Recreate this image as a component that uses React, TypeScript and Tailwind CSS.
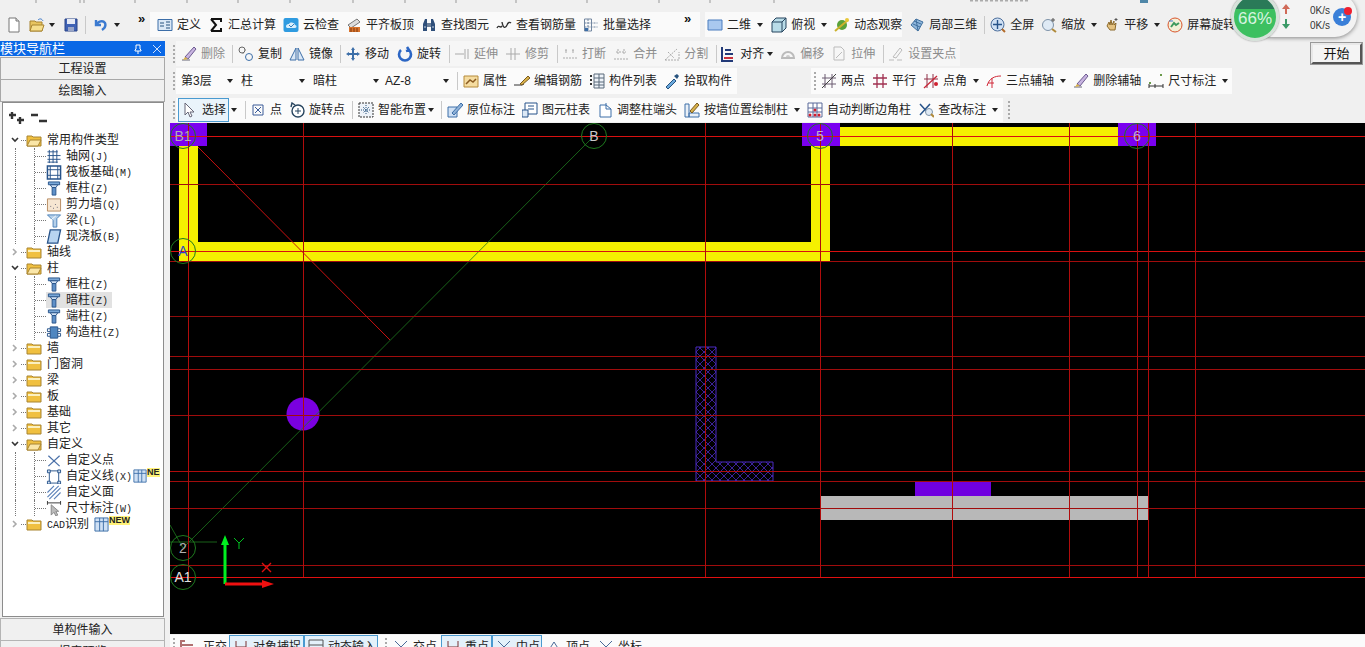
import type { ReactNode } from 'react';

// small toolbar drawings, all on a 16x16 grid
const icons: Record<string, ReactNode> = {
  file: <><path d="M3 1h7l3 3v11H3z" fill="#fff" stroke="#777" /><path d="M10 1v3h3" fill="#ddd" stroke="#777" /></>,
  open: <><path d="M1 4h5l1 1h6v9H1z" fill="#e8c560" stroke="#a88430" /><path d="M3 8h12l-2 6H1z" fill="#f6de8c" stroke="#a88430" /><path d="M9 3c2-2 4-1 5 1" fill="none" stroke="#3a78c8" /></>,
  save: <><path d="M2 2h12v12H2z" fill="#3f62b5" stroke="#2a4488" /><path d="M4 2h8v5H4z" fill="#e6eaf5" /><path d="M5 10h6v4H5z" fill="#9aa6c8" /></>,
  undo: <path d="M4 3v5h5M4.500 8C6 4 11 3 13 6c1 2.500 0 5-3 7" fill="none" stroke="#3b7ad0" strokeWidth="2.400" />,
  define: <><path d="M1 2.500h14v11H1z" fill="#dbe8f6" stroke="#3c6ea8" /><path d="M3 6h4M3 9h4M9 5h4M9 8h4M9 11h4" stroke="#27537f" /></>,
  sum: <path d="M3 2h10v3M3 14h10v-3M3 2l5 6-5 6" fill="none" stroke="#111" strokeWidth="2" />,
  cloud: <><rect x="0.500" y="1" width="15" height="14" rx="2" fill="#2f9be0" /><path d="M3 10c0-3 2-3 3-3 1-2 5-2 6 1 2 0 2 3 0 3H4z" fill="#d9eefb" /><path d="M6 8l2 2 3-3" fill="none" stroke="#2f7fc0" /></>,
  level: <><path d="M2 8l9-6 3 3-9 6z" fill="#ddd" stroke="#777" /><path d="M3 10h11v5H3z" fill="#d9742c" /><path d="M5 11v4M8 11v4M11 11v4" stroke="#7a3810" /></>,
  binoc: <><path d="M2 14V7l2-5h2v12zM10 14V2h2l2 5v7z" fill="#2f4f7a" /><path d="M6 6h4v4H6z" fill="#6c7f98" /><path d="M3 10h2M11 10h2" stroke="#c7d3e2" /></>,
  rebar: <path d="M1 11c2-4 3 1 5-2M6 5c1 6 3 7 5 3 1-3 3-3 4-2" fill="none" stroke="#333" strokeWidth="1.400" />,
  batch: <><path d="M1.500 2h7v12h-7z" fill="none" stroke="#7286a0" /><path d="M1.500 6h13M1.500 10h13M5 2v12" stroke="#7286a0" strokeDasharray="2 1" /><path d="M2 11h3v3H2z" fill="#3c6ea8" /></>,
  plane: <path d="M1 3h14v10H1z" fill="#a9c8ef" stroke="#4b7dbe" />,
  box: <><path d="M1 5l4-4h10v10l-4 4H1z" fill="#b9dce8" stroke="#27445e" /><path d="M1 5h10v10M11 5l4-4" fill="none" stroke="#27445e" /></>,
  orbit: <><circle cx="8" cy="8" r="5" fill="#5aa23a" /><path d="M1 14L14 3" stroke="#cbb12c" strokeWidth="2" /><circle cx="13" cy="3" r="2" fill="#e8c83a" /></>,
  cube3: <><path d="M2 8l5-6 7 3-5 9z" fill="#8fb7dc" stroke="#41709e" /><path d="M5 4l7 3M4 7l7 3M7 2l2 12" stroke="#41709e" /></>,
  full: <><circle cx="7.500" cy="7.500" r="6.500" fill="#cfe0f4" stroke="#4d6f9c" /><path d="M7.500 3v9M3 7.500h9" stroke="#27538a" strokeWidth="1.400" /><path d="M12 12l3 3" stroke="#b36b2a" strokeWidth="2" /></>,
  zoom: <><circle cx="7" cy="8" r="5.500" fill="#dfeaf5" stroke="#7d92a8" /><path d="M11 12l4 3" stroke="#b08a3a" strokeWidth="2" /><path d="M12 1v4M10 3h4" stroke="#555" /></>,
  pan: <><path d="M3 9l2-4 1 3 1-5 1 5 2-4v4l2-2-1 7H6z" fill="#e5c382" stroke="#8c6a2c" /><path d="M12 1v3M10.500 2.500h3" stroke="#555" /></>,
  screen: <><circle cx="8" cy="8" r="7" fill="#f3f0d8" stroke="#d9542c" /><path d="M4 10l3-4 2 2 3-2" stroke="#3e9a5e" fill="none" strokeWidth="2" /><path d="M2 4h4" stroke="#3b7ad0" /></>,
  brush: <><path d="M1 14h8" stroke="#667" /><path d="M4 11L13 1l2 2-8 10z" fill="#c8b4e0" stroke="#6c5a90" /><path d="M2 14l2-3 3 2z" fill="#d9b24a" /></>,
  copy: <><circle cx="4" cy="4" r="3" fill="none" stroke="#666" /><circle cx="11" cy="11" r="3.500" fill="none" stroke="#3c6ea8" /><path d="M7 4h2M5 7v2" stroke="#888" strokeDasharray="1 1" /></>,
  mirror: <path d="M7 2L1 14h6zM9 2l6 12H9z" fill="#dbe8f6" stroke="#3c6ea8" />,
  move: <path d="M8 1l2 3H9v3h3V6l3 2-3 2V9H9v3h1l-2 3-2-3h1V9H4v1L1 8l3-2v1h3V4H6z" fill="#3c6ea8" />,
  rotate: <path d="M4 4a6 6 0 1 0 8 0M10 1l2 3-3 1" fill="none" stroke="#2c66c4" strokeWidth="2.600" />,
  extend: <path d="M1 8h9M11 3v10M14 3v10" stroke="#aaa" />,
  trim: <path d="M1 8h14M6 2v12M10 2v12" stroke="#aaa" />,
  breakLine: <path d="M1 12h14M3 5h3M10 5h3M4 3v4M11 3v4" stroke="#aaa" strokeDasharray="2 1" />,
  merge: <path d="M1 13h14M3 6h10M5 3v6M11 3v6" stroke="#aaa" strokeDasharray="2 1" />,
  split: <path d="M1 14h14V6M1 14L13 3M4 6l6 6" stroke="#aaa" fill="none" strokeDasharray="2 1" />,
  align: <><path d="M2 1v14h11" fill="none" stroke="#223a78" strokeWidth="2" /><path d="M5 4h6M5 8h8" stroke="#223a78" strokeWidth="2" /><path d="M4 12h9" stroke="#c8303c" strokeWidth="2" /></>,
  offset: <><path d="M2 12a6 6 0 1 1 12 0z" fill="none" stroke="#bbb" strokeWidth="2" /><path d="M6 11a2 2 0 1 1 4 0z" fill="#ccc" /></>,
  stretch: <path d="M3 1h7l3 3v10H3zM5 12l6-6" fill="none" stroke="#bbb" />,
  grab: <path d="M1 14h5M9 14h5M5 11L12 2l2 2-6 8z" fill="none" stroke="#bbb" />,
  prop: <><path d="M1 3h14v11H1z" fill="#f5dca0" stroke="#b58a3a" /><path d="M3 11l4-4 3 2 3-3" fill="none" stroke="#8a5a20" strokeWidth="1.500" /></>,
  edit: <><path d="M0 12h8l2-1" stroke="#333" fill="none" /><path d="M6 11L14 3l2 2-8 7z" fill="#d9b24a" stroke="#7a5a20" /></>,
  list: <><path d="M5 1h10v14H5z" fill="#eef3f9" stroke="#5a6a7a" /><path d="M10 1v14M5 5h10M5 9h10M5 12h10" stroke="#5a6a7a" /><path d="M2 2v12" stroke="#333" strokeDasharray="2 2" strokeWidth="2" /></>,
  pick: <><path d="M2 14l8-8 2 2-8 8z" fill="#6aa8dc" stroke="#27537f" /><path d="M10 3l3 3 2-3-2-2z" fill="#27537f" /></>,
  twoPt: <><path d="M4 1v14M11 1v14M1 5h14M1 11h14" stroke="#6a5a70" /><path d="M1 15L15 1" stroke="#444" /></>,
  parallel: <path d="M5 1v14M11 1v14M1 5h14M1 11h14" stroke="#a03050" strokeWidth="1.300" />,
  angle: <><path d="M4 1v14M10 1v14M1 6h14" stroke="#903048" /><path d="M1 15L14 3" stroke="#c82838" strokeWidth="1.300" /><circle cx="13" cy="11" r="2" fill="#d02030" /></>,
  threePt: <><path d="M1 13C3 5 9 3 15 3" fill="none" stroke="#d02838" /><path d="M6 5v10M2 10h6" stroke="#d02838" /></>,
  dim: <><path d="M1 13h14M1 11v4M15 11v4M7 11v4" stroke="#333" /><rect x="1" y="9" width="2" height="2" fill="#6a9a4a" /><rect x="12" y="1" width="2" height="2" fill="#6a9a4a" /></>,
  cursor: <path d="M3 1v12l3-3 2 5 2-1-2-4h4z" fill="#fff" stroke="#667" />,
  pointX: <><path d="M3 3h10v10H3z" fill="none" stroke="#3a5a98" /><path d="M5 5l6 6M11 5l-6 6" stroke="#3a5a98" /></>,
  rotPt: <><circle cx="9" cy="9" r="6" fill="#fff" stroke="#27445e" strokeWidth="1.400" /><path d="M9 6v6M6 9h6" stroke="#27445e" /><path d="M2 5l1-4 3 2" fill="none" stroke="#27445e" strokeWidth="1.400" /></>,
  smart: <><path d="M1 1h14v14H1z" fill="#eef3f9" stroke="#333" strokeDasharray="2 1" /><path d="M8 3v10M3 8h10M5 5l6 6M11 5l-6 6" stroke="#27537f" strokeDasharray="1 1" /></>,
  inPlace: <><path d="M1 5h9v10H1z" fill="#cfe0f4" stroke="#3c6ea8" /><path d="M5 11L14 1l2 2-9 10z" fill="#8fb2d8" stroke="#3c6ea8" /></>,
  table: <><path d="M3 1h12v11H3z" fill="#fff" stroke="#27538a" /><path d="M6 4h6M6 7h6" stroke="#27538a" /><path d="M0 8h6v7H0z" fill="#dbe8f6" stroke="#27538a" /></>,
  adjust: <><path d="M3 3h6l5 4v8H3z" fill="#fff" stroke="#3c6ea8" /><path d="M9 1v6h5" fill="none" stroke="#3c6ea8" /></>,
  wall: <><path d="M1 2h4v13H1zM5 11h10v4H5z" fill="#eaf0f7" stroke="#3c6ea8" /><path d="M6 9l7-8 2 2-7 8z" fill="#d9b24a" stroke="#7a5a20" /></>,
  corner: <><path d="M1 1h14v14H1zM1 6h14M1 10h14M6 1v14M10 1v14" fill="#fff" stroke="#5a6a9a" /><circle cx="3" cy="13" r="1.500" fill="#d02030" /><circle cx="8" cy="13" r="1.500" fill="#d02030" /><circle cx="12" cy="13" r="1.500" fill="#d02030" /><circle cx="8" cy="8" r="1.500" fill="#d02030" /></>,
  review: <><path d="M2 2l10 11M12 2L2 13" stroke="#27538a" strokeWidth="1.500" /><circle cx="11" cy="10" r="3.500" fill="#dfeaf5" stroke="#7d92a8" /><path d="M13 12l3 3" stroke="#b08a3a" strokeWidth="2" /></>,
  ortho: <path d="M2 14V2h4M2 6h12" stroke="#b07070" strokeWidth="2" fill="none" />,
  snap: <path d="M3 2v12M13 2v12M3 8h10" stroke="#7a3030" />,
  dynamic: <path d="M1 1h14v12H1zM1 6h14" fill="none" stroke="#555" />,
  cross: <path d="M2 2l12 12M14 2L2 14" stroke="#4a6a98" />,
  up: <path d="M1 14L8 3l7 11" fill="none" stroke="#4a6a98" />,
  column: <><path d="M2 1h12v3H2z" fill="#7aa8d8" stroke="#27538a" /><path d="M4 4h8l-2 3H6z" fill="#cfe0f4" stroke="#27538a" /><path d="M6 7h4v8H6z" fill="#5f90c8" stroke="#27538a" /></>,
  grid: <path d="M1 3h11M1 7h14M1 11h14M1 14h11M3 1v14M7 1v14M11 1v14" stroke="#27538a" />,
  raft: <><path d="M1 1h14v14H1z" fill="#fff" stroke="#27538a" strokeWidth="1.600" /><path d="M4 1v14M12 1v14M1 5h14M1 11h14" stroke="#27538a" /></>,
  shear: <><path d="M1 2h14v13H1z" fill="#f6e6d2" stroke="#b58a60" /><path d="M4 10h1M7 12h1M9 8h1M11 11h1" stroke="#667" /></>,
  beam: <><path d="M1 2h14l-4 4v9H7V8z" fill="#b5d0ea" stroke="#4a80b8" /><path d="M10 3l-7 6" stroke="#fff" /></>,
  slab: <path d="M4 1h11l-3 14H1z" fill="#b8d4f0" stroke="#27538a" strokeWidth="1.400" />,
  struct: <><path d="M4 2h8v12H4z" fill="#4f86c0" stroke="#27538a" /><path d="M1 4h3v3H1zM12 4h3v3h-3zM1 9h3v3H1zM12 9h3v3h-3z" fill="#fff" stroke="#27538a" /></>,
  userPt: <><path d="M2 3l12 11M14 3L2 14" stroke="#4a70a8" strokeWidth="1.300" /></>,
  userLine: <><path d="M3 2h10v13H3z" fill="none" stroke="#27538a" /><path d="M1 1h3v3H1zM12 1h3v3h-3zM1 13h3v3H1zM12 13h3v3h-3z" fill="#cfe0f4" stroke="#27538a" /></>,
  userArea: <path d="M1 8l7-7M1 13L13 1M3 15L15 3M8 15l7-7" stroke="#5a80b8" strokeWidth="1.200" />,
  userDim: <><path d="M1 2h14M1 0v4M15 0v4" stroke="#333" /><path d="M5 4v11l3-3 2 4 2-1-2-4h3z" fill="#bbb" stroke="#888" /></>,
  book: <path d="M1 1h14v14H1zM6 1v14M10 1v14M1 5h14" fill="#cfe0f4" stroke="#3c6ea8" />,
};

function Icon({ name, className = 'h-4 w-4' }: { name: string; className?: string }) {
  return (
    <svg viewBox="0 0 16 16" className={`shrink-0 ${className}`}>
      {icons[name]}
    </svg>
  );
}

function Tool({ icon, label, off, className = '' }: { icon: string; label: string; off?: boolean; className?: string }) {
  return (
    <div className={`flex shrink-0 items-center ${className}`}>
      <Icon name={icon} />
      <span className={`ml-1 whitespace-nowrap ${off ? 'text-[#8c8c8c]' : 'text-[#222]'}`}>{label}</span>
    </div>
  );
}

function Caret({ className = '' }: { className?: string }) {
  return (
    <svg viewBox="0 0 6 4" className={`h-1 w-[6px] shrink-0 ${className}`}>
      <path d="M0 0h6L3 4z" fill="#222" />
    </svg>
  );
}

function Divider({ className = '' }: { className?: string }) {
  return <div className={`h-[18px] w-px shrink-0 bg-[#c9c9c9] ${className}`} />;
}

function Grip({ className = '' }: { className?: string }) {
  return <div className={`h-[18px] w-[3px] shrink-0 border-l-2 border-dotted border-[#aaa] ${className}`} />;
}

function Chevrons({ className = '' }: { className?: string }) {
  return <span className={`-mt-3 w-[11px] shrink-0 text-[13px] font-bold leading-none text-[#111] ${className}`}>»</span>;
}

function Combo({ label, className }: { label: string; className: string }) {
  return (
    <div className={`flex shrink-0 items-center justify-between ${className}`}>
      <span>{label}</span>
      <Caret />
    </div>
  );
}

type TreeItem = {
  label: string;
  latin?: string;
  icon?: string;
  open?: boolean;
  active?: boolean;
  badge?: boolean;
};

const tree: TreeItem[] = [
  { label: '常用构件类型', open: true },
  { label: '轴网', latin: '(J)', icon: 'grid' },
  { label: '筏板基础', latin: '(M)', icon: 'raft' },
  { label: '框柱', latin: '(Z)', icon: 'column' },
  { label: '剪力墙', latin: '(Q)', icon: 'shear' },
  { label: '梁', latin: '(L)', icon: 'beam' },
  { label: '现浇板', latin: '(B)', icon: 'slab' },
  { label: '轴线' },
  { label: '柱', open: true },
  { label: '框柱', latin: '(Z)', icon: 'column' },
  { label: '暗柱', latin: '(Z)', icon: 'column', active: true },
  { label: '端柱', latin: '(Z)', icon: 'column' },
  { label: '构造柱', latin: '(Z)', icon: 'struct' },
  { label: '墙' },
  { label: '门窗洞' },
  { label: '梁' },
  { label: '板' },
  { label: '基础' },
  { label: '其它' },
  { label: '自定义', open: true },
  { label: '自定义点', icon: 'userPt' },
  { label: '自定义线', latin: '(X)', icon: 'userLine', badge: true },
  { label: '自定义面', icon: 'userArea' },
  { label: '尺寸标注', latin: '(W)', icon: 'userDim' },
];

function Folder({ open }: { open?: boolean }) {
  return (
    <svg viewBox="0 0 16 14" className="h-[14px] w-4 shrink-0">
      <path d="M1 3h5l1 1h8v9H1z" fill="#f0c040" stroke="#a88430" />
      {open ? <path d="M4 7h11l-3 6H1z" fill="#fae6a8" stroke="#a88430" /> : <path d="M2 5h12v2H2z" fill="#fbf0c0" />}
    </svg>
  );
}

function Expander({ open }: { open?: boolean }) {
  return (
    <svg viewBox="0 0 8 8" className="ml-2 h-2 w-2 shrink-0">
      {open ? (
        <path d="M1 2l3 3 3-3" fill="none" stroke="#333" strokeWidth="1.600" />
      ) : (
        <path d="M2 1l3 3-3 3" fill="none" stroke="#aaa" strokeWidth="1.600" />
      )}
    </svg>
  );
}

function TreeRow({ item }: { item: TreeItem }) {
  if (!item.icon) {
    return (
      <div className="flex h-4 shrink-0 items-center">
        <Expander open={item.open} />
        <span className="ml-[2px] w-[5px] border-t border-dotted border-[#777]" />
        <Folder open={item.open} />
        <span className="ml-[5px] whitespace-nowrap">{item.label}</span>
      </div>
    );
  }
  return (
    <div className="flex h-4 shrink-0 items-stretch">
      <span className="w-[13px] shrink-0 border-r border-dotted border-[#777]" />
      <span className="w-[19px] shrink-0 border-r border-dotted border-[#777]" />
      <span className="w-[11px] shrink-0 self-center border-t border-dotted border-[#777]" />
      <div className={`flex items-center ${item.active ? 'bg-[#e2e2e2] pr-[4px]' : ''}`}>
        <Icon name={item.icon} className="h-[15px] w-4" />
        <span className="ml-1 whitespace-nowrap">
          {item.label}
          {item.latin && <span className="[font-family:'Liberation_Mono',monospace] text-[10px]">{item.latin}</span>}
        </span>
      </div>
      {item.badge && (
        <div className="flex items-center">
          <Icon name="book" className="ml-px h-[14px] w-[14px]" />
          <span className="-mt-2 bg-[#fff27a] text-[9px] font-bold leading-[9px] text-[#222]">NE</span>
        </div>
      )}
    </div>
  );
}

function Sidebar() {
  return (
    <aside className="flex w-[165px] shrink-0 flex-col">
      <div className="flex h-[15px] shrink-0 items-center justify-between bg-[#0a68e6] pr-[3px] text-[13px] leading-none text-white">
        <span>模块导航栏</span>
        <span className="flex items-center gap-[9px]">
          <svg viewBox="0 0 10 10" className="h-[10px] w-[10px]">
            <path d="M3 1h4v4l1 1v1H2V6l1-1zM5 7v3" fill="none" stroke="#fff" />
          </svg>
          <svg viewBox="0 0 10 10" className="h-[10px] w-[10px]">
            <path d="M1 1l8 8M9 1L1 9" stroke="#cfe0fa" />
          </svg>
        </span>
      </div>
      <div className="mt-px flex h-[23px] shrink-0 items-center justify-center border border-[#a8a8a8] bg-[#f0f0f0]">工程设置</div>
      <div className="flex h-[22px] shrink-0 items-center justify-center border-x border-b border-[#a8a8a8] bg-[#f0f0f0]">绘图输入</div>
      <div className="ml-[2px] mr-px flex h-[515px] shrink-0 flex-col border border-[#8c8c8c] bg-white">
        <div className="flex h-[29px] shrink-0 items-center gap-[4px] pl-[5px]">
          <svg viewBox="0 0 18 14" className="h-[14px] w-[18px]">
            <path d="M4 1v7M1 4h7M12 6v7M9 9h7" stroke="#333" strokeWidth="2.400" />
          </svg>
          <svg viewBox="0 0 18 14" className="h-[14px] w-[18px]">
            <path d="M1 4h7M9 10h8" stroke="#333" strokeWidth="2.400" />
          </svg>
        </div>
        {tree.map((item, i) => (
          <TreeRow key={i} item={item} />
        ))}
        <div className="flex h-4 shrink-0 items-center">
          <Expander />
          <span className="ml-[2px] w-[5px] border-t border-dotted border-[#777]" />
          <Folder />
          <span className="ml-[5px] whitespace-nowrap">
            <span className="[font-family:'Liberation_Mono',monospace] text-[10px]">CAD</span>识别
          </span>
          <Icon name="book" className="ml-[5px] h-[15px] w-[15px]" />
          <span className="-mt-2 bg-[#fff27a] text-[9px] font-bold leading-[9px] text-[#222]">NEW</span>
        </div>
      </div>
      <div className="mt-px flex h-[23px] shrink-0 items-center justify-center border border-[#b4b4b4] bg-[#f0f0f0]">单构件输入</div>
      <div className="flex h-[23px] shrink-0 items-center justify-center border-x border-b border-[#b4b4b4] bg-[#f0f0f0]">报表预览</div>
    </aside>
  );
}

function Drawing() {
  const hLines = [
    [136.5, '#d81010'], [184.5, '#a00c0c'], [251.5, '#d81010'], [261.5, '#a00c0c'], [316.5, '#900c0c'], [356.5, '#a00c0c'],
    [369.5, '#a00c0c'], [415.5, '#a00c0c'], [471.5, '#b00c0c'], [481.5, '#a00c0c'], [508.5, '#a00c0c'], [565.5, '#a00c0c'], [577.5, '#e01010'],
  ] as const;
  const vLines = [188.5, 303.5, 705.5, 820.5, 952.5, 1069.5, 1137.5, 1148.5, 1195.5];
  const bubbles = [
    { x: 183, y: 136, t: 'B1', c: '#b0b0b0' },
    { x: 594, y: 136, t: 'B', c: '#c8c8c8' },
    { x: 183, y: 251, t: 'A', c: '#3048c8' },
    { x: 820, y: 136, t: '5', c: '#c0b0c8' },
    { x: 1137, y: 136, t: '6', c: '#c0b0c8' },
    { x: 183, y: 548, t: '2', c: '#b0b0b0' },
    { x: 183, y: 577, t: 'A1', c: '#e0e0e0' },
  ];
  return (
    <svg viewBox="170 123 1195 511" className="block h-[511px] w-[1195px] bg-black">
      <defs>
        <pattern id="hatch" width="8" height="8" patternUnits="userSpaceOnUse">
          <path d="M0 0l8 8M8 0L0 8" stroke="#4a2ac0" strokeWidth="0.800" />
        </pattern>
      </defs>

      {/* wall centre lines and columns */}
      <path d="M179 146h19v96h613V146h19v115H179z" fill="#f5f000" />
      <path d="M840 127h278v19H840z" fill="#f5f000" />
      <path d="M170 123h37v23h-37zM802 123h38v23h-38zM1118 123h38v23h-38z" fill="#7a00f0" />
      <path d="M915 482h76v14h-76z" fill="#7000e0" />
      <path d="M821 496h327v24H821z" fill="#b8b8b8" />
      <path d="M696 347h20v115h57v19h-77z" fill="url(#hatch)" stroke="#4a2ac0" />
      <circle cx="303" cy="414" r="16.500" fill="#7a00e0" />

      {/* axis grid */}
      <path d="M183 548L594 136M170 542h47M170 525l13 23" stroke="#1e7a1e" strokeWidth="0.800" fill="none" />
      {hLines.map(([y, c]) => (
        <line key={y} x1="170" x2="1365" y1={y} y2={y} stroke={c} />
      ))}
      {vLines.map((x) => (
        <line key={x} x1={x} x2={x} y1="123" y2="577" stroke="#b00c0c" />
      ))}
      <line x1="198" y1="147" x2="390" y2="340" stroke="#c81010" />

      {bubbles.map((b) => (
        <g key={b.t}>
          <circle cx={b.x} cy={b.y} r="12.500" fill="none" stroke="#1e7a1e" />
          <text x={b.x} y={b.y + 5} textAnchor="middle" fontSize="14" fontFamily="Liberation Sans, sans-serif" fill={b.c}>
            {b.t}
          </text>
        </g>
      ))}

      {/* coordinate marker */}
      <path d="M225 584v-42" stroke="#00f020" strokeWidth="3" />
      <path d="M225 535l4 10h-8z" fill="#00f020" />
      <path d="M225 584h38" stroke="#f01010" strokeWidth="3" />
      <path d="M274 584l-12-4v8z" fill="#f01010" />
      <path d="M234 538l5 5 5-5M239 543v6" stroke="#00c020" fill="none" />
      <path d="M262 563l9 9M271 563l-9 9" stroke="#e01010" strokeWidth="1.400" />
    </svg>
  );
}

function SpeedWidget() {
  return (
    <>
      <div className="absolute left-[1250px] top-[-7px] h-11 w-[107px] rounded-full bg-[#f3f3f3] shadow-[0_1px_4px_rgba(0,0,0,0.45)]">
        <svg viewBox="0 0 10 10" className="absolute left-[31px] top-[11px] h-[10px] w-[10px]">
          <path d="M5 0l4 5H6v5H4V5H1z" fill="#d06a58" />
        </svg>
        <svg viewBox="0 0 10 10" className="absolute left-[31px] top-[26px] h-[10px] w-[10px]">
          <path d="M5 10L1 5h3V0h2v5h3z" fill="#3c9a68" />
        </svg>
        <span className="absolute left-[60px] top-[11px] text-[10px] leading-[14px] text-[#333] [font-family:'Liberation_Sans',sans-serif]">0K/s</span>
        <span className="absolute left-[60px] top-[26px] text-[10px] leading-[14px] text-[#333] [font-family:'Liberation_Sans',sans-serif]">0K/s</span>
        <span className="absolute left-[83px] top-[15px] flex h-[18px] w-[18px] items-center justify-center rounded-full bg-[#3a7fd8] text-[14px] font-bold leading-none text-white">+</span>
        <span className="absolute left-[94px] top-[14px] h-2 w-2 rounded-full bg-[#ee2030]" />
      </div>
      <div className="absolute left-[1231px] top-[-7px] flex h-12 w-12 items-center justify-center overflow-hidden rounded-full border-[3px] border-[#d6e2da] bg-[linear-gradient(#2a7a58_0,#2a7a58_30%,#3cc060_30%,#3cc060_100%)] shadow-[0_0_2px_rgba(0,0,0,0.5)]">
        <span className="mt-[2px] text-[17px] leading-none text-[#d8f4e0] [font-family:'Liberation_Sans',sans-serif]">66%</span>
      </div>
      <div className="absolute left-[1311px] top-[43px] flex h-[21px] w-[51px] items-center justify-center border-2 border-[#e8e8e8] border-b-[#555] border-r-[#555] bg-[#f4f4f4] text-[13px] text-[#111] outline outline-1 outline-[#999]">
        开始
      </div>
    </>
  );
}

export default function App() {
  return (
    <div className="relative flex h-[647px] w-[1365px] flex-col overflow-hidden bg-[#f0f0f0] text-[12px] leading-none text-[#222] [font-family:'Liberation_Sans','Noto_Sans_CJK_SC',sans-serif]">
      {/* what is left of the menu bar above the crop */}
      <svg className="h-3 w-full shrink-0">
        <path d="M36 0v3M80 0v3M84 0v3M135 0v3M187 0v3M238 0v3M290 0v3M353 0v3M405 0v3M456 0v3M516 0v3M587 0v3M659 0v3M710 0v3M774 0v3" stroke="#999" />
        <path d="M970 0h60" stroke="#aaa" strokeDasharray="3 2" strokeWidth="3" />
        <path d="M1140 0h8" stroke="#4f87a8" strokeWidth="6" />
      </svg>

      {/* standard toolbar */}
      <div className="flex h-[25px] shrink-0 items-center">
        <Icon name="file" className="ml-[6px] h-4 w-4" />
        <Icon name="open" className="ml-[6px] h-4 w-[18px]" />
        <Caret className="ml-[3px]" />
        <Icon name="save" className="ml-[8px] h-4 w-4" />
        <Divider className="ml-[6px]" />
        <Icon name="undo" className="ml-[6px] h-4 w-4" />
        <Caret className="ml-[6px]" />
        <Chevrons className="ml-[18px]" />
        <div className="ml-px flex h-full items-center gap-[7px] bg-[#fafafa] pl-[7px] pr-[5px]">
          <Tool icon="define" label="定义" />
          <Tool icon="sum" label="汇总计算" />
          <Tool icon="cloud" label="云检查" />
          <Tool icon="level" label="平齐板顶" />
          <Tool icon="binoc" label="查找图元" />
          <Tool icon="rebar" label="查看钢筋量" />
          <Tool icon="batch" label="批量选择" />
          <Chevrons className="ml-[26px]" />
        </div>
        <div className="ml-[5px] flex h-full items-center bg-[#fafafa] pl-[2px]">
          <Tool icon="plane" label="二维" />
          <Caret className="ml-[6px]" />
          <Tool icon="box" label="俯视" className="ml-[8px]" />
          <Caret className="ml-[6px]" />
          <Tool icon="orbit" label="动态观察" className="ml-[7px]" />
        </div>
        <div className="flex h-full items-center">
          <Tool icon="cube3" label="局部三维" className="ml-[7px]" />
          <Divider className="ml-[7px]" />
          <Tool icon="full" label="全屏" className="ml-[5px]" />
          <Tool icon="zoom" label="缩放" className="ml-[7px]" />
          <Caret className="ml-[6px]" />
          <Tool icon="pan" label="平移" className="ml-[7px]" />
          <Caret className="ml-[6px]" />
          <Tool icon="screen" label="屏幕旋转" className="ml-[7px]" />
        </div>
      </div>

      <div className="mt-1 flex min-h-0 flex-1">
        <Sidebar />
        <div className="ml-[5px] flex min-w-0 flex-1 flex-col">
          {/* modify toolbar */}
          <div className="flex h-[25px] shrink-0 items-center">
            <Grip className="ml-[3px]" />
            <div className="flex h-full items-center bg-[#f6f6f6] pr-1">
              <Tool icon="brush" label="删除" off className="ml-[5px]" />
              <Divider className="ml-[7px]" />
              <Tool icon="copy" label="复制" className="ml-[5px]" />
              <Tool icon="mirror" label="镜像" className="ml-[7px]" />
              <Divider className="ml-[7px]" />
              <Tool icon="move" label="移动" className="ml-1" />
              <Tool icon="rotate" label="旋转" className="ml-2" />
              <Divider className="ml-2" />
              <Tool icon="extend" label="延伸" off className="ml-1" />
              <Tool icon="trim" label="修剪" off className="ml-[7px]" />
              <Divider className="ml-2" />
              <Tool icon="breakLine" label="打断" off className="ml-1" />
              <Tool icon="merge" label="合并" off className="ml-[7px]" />
              <Tool icon="split" label="分割" off className="ml-[7px]" />
              <Divider className="ml-2" />
              <Tool icon="align" label="对齐" className="ml-[3px]" />
              <Caret className="ml-[3px]" />
              <Tool icon="offset" label="偏移" off className="ml-[7px]" />
              <Tool icon="stretch" label="拉伸" off className="ml-[7px]" />
              <Divider className="ml-2" />
              <Tool icon="grab" label="设置夹点" off className="ml-1" />
            </div>
          </div>

          {/* component selectors and drawing aids */}
          <div className="mt-[2px] flex h-[26px] shrink-0 items-center">
            <Grip className="ml-[3px]" />
            <div className="flex h-full items-center bg-[#fbfbfb] pr-[5px]">
              <Combo label="第3层" className="ml-[5px] w-[52px]" />
              <Combo label="柱" className="ml-2 w-16" />
              <Combo label="暗柱" className="ml-2 w-[66px]" />
              <Combo label="AZ-8" className="ml-[6px] w-16" />
              <Divider className="ml-2" />
              <Tool icon="prop" label="属性" className="ml-[5px]" />
              <Tool icon="edit" label="编辑钢筋" className="ml-[7px]" />
              <Tool icon="list" label="构件列表" className="ml-[7px]" />
              <Tool icon="pick" label="拾取构件" className="ml-[7px]" />
            </div>
            <div className="ml-[74px] flex h-full items-center bg-[#fbfbfb] pr-1">
              <Grip className="ml-[3px]" />
              <Tool icon="twoPt" label="两点" className="ml-1" />
              <Tool icon="parallel" label="平行" className="ml-[7px]" />
              <Tool icon="angle" label="点角" className="ml-[7px]" />
              <Caret className="ml-[6px]" />
              <Tool icon="threePt" label="三点辅轴" className="ml-[7px]" />
              <Caret className="ml-[6px]" />
              <Tool icon="brush" label="删除辅轴" className="ml-[7px]" />
              <Tool icon="dim" label="尺寸标注" className="ml-[7px]" />
              <Caret className="ml-[6px]" />
            </div>
          </div>

          {/* column tools */}
          <div className="mt-1 flex h-6 shrink-0 items-center">
            <Grip className="ml-[3px]" />
            <div className="flex h-full items-center bg-[#fbfbfb] pr-[5px]">
              <div className="ml-[2px] flex h-[24px] w-[51px] items-center border border-[#4a9ad0] bg-[#eaf4fb] pl-[3px]">
                <Icon name="cursor" />
                <span className="ml-1">选择</span>
              </div>
              <Caret className="ml-[2px]" />
              <Divider className="ml-2" />
              <Tool icon="pointX" label="点" className="ml-1" />
              <Tool icon="rotPt" label="旋转点" className="ml-[7px]" />
              <Divider className="ml-[7px]" />
              <Tool icon="smart" label="智能布置" className="ml-[5px]" />
              <Caret className="ml-[2px]" />
              <Divider className="ml-[7px]" />
              <Tool icon="inPlace" label="原位标注" className="ml-[5px]" />
              <Tool icon="table" label="图元柱表" className="ml-[7px]" />
              <Tool icon="adjust" label="调整柱端头" className="ml-[7px]" />
              <Tool icon="wall" label="按墙位置绘制柱" className="ml-[7px]" />
              <Caret className="ml-[6px]" />
              <Tool icon="corner" label="自动判断边角柱" className="ml-[7px]" />
              <Tool icon="review" label="查改标注" className="ml-[7px]" />
              <Caret className="ml-[6px]" />
            </div>
            <Grip className="ml-[5px]" />
          </div>

          <div className="mt-px shrink-0">
            <Drawing />
          </div>

          {/* status bar, cut off by the window edge */}
          <div className="mt-px flex h-[24px] shrink-0 items-center bg-[#fbfbfb]">
            <Grip className="ml-[3px]" />
            <Tool icon="ortho" label="正交" className="ml-[3px] [&>span]:ml-2" />
            <div className="ml-[2px] flex h-full w-[75px] items-center border border-[#4a9ad0] bg-[#e4f1fa] pl-[3px]">
              <Tool icon="snap" label="对象捕捉" />
            </div>
            <div className="flex h-full w-[74px] items-center border border-[#4a9ad0] bg-[#e4f1fa] pl-[3px]">
              <Tool icon="dynamic" label="动态输入" />
            </div>
            <Grip className="ml-[7px]" />
            <Tool icon="cross" label="交点" className="ml-[5px]" />
            <div className="ml-1 flex h-full w-[51px] items-center border border-[#4a9ad0] bg-[#e4f1fa] pl-[3px]">
              <Tool icon="snap" label="重点" />
            </div>
            <div className="flex h-full w-[50px] items-center border border-[#4a9ad0] bg-[#e4f1fa] pl-[3px]">
              <Tool icon="cross" label="中点" />
            </div>
            <Tool icon="up" label="顶点" className="ml-1" />
            <Tool icon="cross" label="坐标" className="ml-2" />
          </div>
        </div>
      </div>

      <SpeedWidget />
    </div>
  );
}
